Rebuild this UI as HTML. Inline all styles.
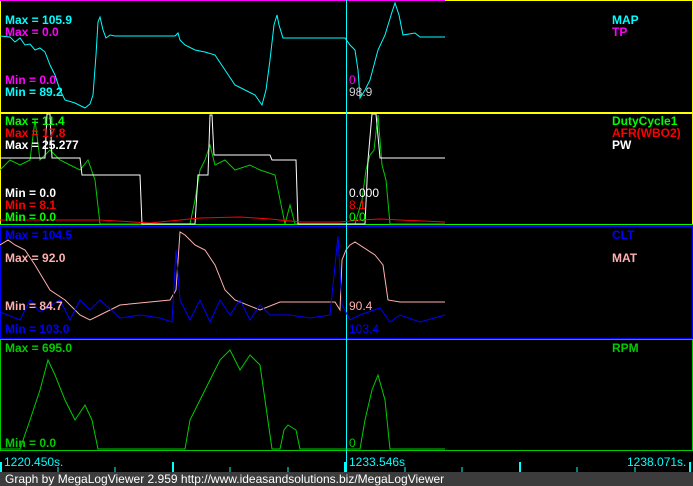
<!DOCTYPE html><html><head><style>
body{margin:0;background:#000;width:693px;height:486px;overflow:hidden;position:relative;font-family:"Liberation Sans",sans-serif}
.l{position:absolute;font-size:12px;font-weight:bold;line-height:12px;white-space:nowrap}
.n{position:absolute;font-size:12px;line-height:12px;white-space:nowrap}
#ft{position:absolute;left:0;top:472px;width:693px;height:14px;background:#3c3c3c;color:#fff;font-size:12px;line-height:14px;padding-left:5px;box-sizing:border-box}
</style></head><body>
<svg width="693" height="486" style="position:absolute;left:0;top:0" fill="none" stroke-width="1">
<rect x="0.5" y="0.5" width="692" height="112" stroke="#ff0"/>
<line x1="0" y1="0.5" x2="445" y2="0.5" stroke="#f0f"/>
<rect x="0.5" y="113.5" width="692" height="111" stroke="#ff0"/>
<line x1="0" y1="224.5" x2="693" y2="224.5" stroke="#0f0"/>
<rect x="0.5" y="226.5" width="692" height="112" stroke="#00f"/>
<rect x="0.5" y="339.5" width="692" height="111" stroke="#0c0"/>
<line x1="346.5" y1="0" x2="346.5" y2="472" stroke="#0ff"/>
<polyline stroke="#0ff" points="0,36 10,37 15,42 20,38 25,45 30,44 35,50 40,48 45,52 50,65 55,75 60,90 65,100 75,103 85,108 90,104 93,95 96,55 98,22 100,17 103,30 106,38 110,35 115,36 175,36 178,33 180,40 185,45 195,50 205,52 215,55 225,70 235,85 245,90 255,95 262,105 266,90 270,60 274,25 277,15 279,25 283,38 345,38 350,45 355,50 358,70 360,98 365,90 370,80 378,50 385,35 392,12 395,3 399,15 403,35 415,33 420,37 445,37"/>
<polyline stroke="#0c0" points="0,170 10,160 20,165 30,160 35,120 40,160 50,150 60,160 70,165 80,170 88,160 95,180 100,224 180,224 190,224 195,200 200,170 205,160 210,145 215,165 225,160 235,170 250,165 260,170 275,175 285,224 290,205 295,224 355,224 362,200 366,170 370,155 374,150 378,115 382,165 386,180 390,224 445,224"/>
<polyline stroke="#fff" points="0,158 45,158 47,114 50,114 52,158 80,158 82,175 140,175 142,224 195,224 198,175 208,175 210,115 212,115 214,155 270,155 272,160 296,160 298,224 365,224 368,160 372,114 376,114 380,158 445,158"/>
<polyline stroke="#f00" points="0,220 100,220 150,223 200,218 240,217 270,219 300,222 340,222 360,220 380,219 400,220 445,222"/>
<polyline stroke="#ffb0b0" points="0,245 8,240 15,245 25,250 35,265 50,290 65,300 80,315 90,320 100,315 120,305 170,300 176,290 180,232 185,235 195,245 205,250 215,265 225,290 235,300 260,310 280,302 335,302 340,310 342,260 346,250 350,245 355,242 375,255 383,265 388,300 400,302 445,302"/>
<polyline stroke="#00f" points="0,312 20,320 30,300 40,312 60,300 70,320 80,300 90,310 100,300 120,318 140,315 160,318 172,322 176,250 180,300 190,320 200,300 210,322 220,300 230,315 240,300 250,320 260,305 270,315 290,315 310,318 330,315 338,236 342,305 350,320 360,315 380,308 390,322 400,315 420,322 445,315"/>
<polyline stroke="#0c0" points="0,449 20,449 30,420 40,390 48,360 55,375 65,400 75,420 85,405 92,420 98,449 180,449 185,449 190,420 200,400 210,380 220,360 230,350 240,370 250,355 260,365 265,400 272,449 280,449 284,430 288,425 296,430 300,449 360,449 365,420 372,390 378,375 385,400 390,449 445,449"/>
<g stroke="#0ff" stroke-width="2"><line x1="1" y1="462" x2="1" y2="472"/><line x1="173" y1="462" x2="173" y2="472"/><line x1="345" y1="462" x2="345" y2="472"/><line x1="520" y1="462" x2="520" y2="472"/><line x1="690" y1="462" x2="690" y2="472"/></g>
<g stroke="#0ff"><line x1="58" y1="467" x2="58" y2="472"/><line x1="115" y1="467" x2="115" y2="472"/><line x1="230" y1="467" x2="230" y2="472"/><line x1="288" y1="467" x2="288" y2="472"/><line x1="405" y1="467" x2="405" y2="472"/><line x1="462" y1="467" x2="462" y2="472"/><line x1="577" y1="467" x2="577" y2="472"/><line x1="635" y1="467" x2="635" y2="472"/></g>
</svg>
<div class="l" style="left:5px;top:14px;color:#0ff">Max = 105.9</div>
<div class="l" style="left:5px;top:26px;color:#f0f">Max = 0.0</div>
<div class="l" style="left:5px;top:74px;color:#f0f">Min = 0.0</div>
<div class="l" style="left:5px;top:86px;color:#0ff">Min = 89.2</div>
<div class="l" style="left:612px;top:14px;color:#0ff">MAP</div>
<div class="l" style="left:612px;top:26px;color:#f0f">TP</div>
<div class="n" style="left:349px;top:74px;color:#f0f">0</div>
<div class="n" style="left:349px;top:86px;color:#ccc">98.9</div>
<div class="l" style="left:5px;top:115px;color:#0f0">Max = 11.4</div>
<div class="l" style="left:5px;top:127px;color:#f00">Max = 17.8</div>
<div class="l" style="left:5px;top:139px;color:#fff">Max = 25.277</div>
<div class="l" style="left:612px;top:115px;color:#0f0">DutyCycle1</div>
<div class="l" style="left:612px;top:127px;color:#f00">AFR(WBO2)</div>
<div class="l" style="left:612px;top:139px;color:#fff">PW</div>
<div class="l" style="left:5px;top:187px;color:#fff">Min = 0.0</div>
<div class="l" style="left:5px;top:199px;color:#f00">Min = 8.1</div>
<div class="l" style="left:5px;top:211px;color:#0f0">Min = 0.0</div>
<div class="n" style="left:349px;top:187px;color:#fff">0.000</div>
<div class="n" style="left:349px;top:199px;color:#f00">8.1</div>
<div class="n" style="left:349px;top:211px;color:#0f0">0.0</div>
<div class="l" style="left:5px;top:229px;color:#00f">Max = 104.5</div>
<div class="l" style="left:5px;top:252px;color:#ffb0b0">Max = 92.0</div>
<div class="l" style="left:612px;top:229px;color:#00f">CLT</div>
<div class="l" style="left:612px;top:252px;color:#ffb0b0">MAT</div>
<div class="l" style="left:5px;top:300px;color:#ffb0b0">Min = 84.7</div>
<div class="l" style="left:5px;top:323px;color:#00f">Min = 103.0</div>
<div class="n" style="left:349px;top:300px;color:#ffb0b0">90.4</div>
<div class="n" style="left:349px;top:323px;color:#00f">103.4</div>
<div class="l" style="left:5px;top:342px;color:#0c0">Max = 695.0</div>
<div class="l" style="left:612px;top:342px;color:#0c0">RPM</div>
<div class="l" style="left:5px;top:437px;color:#0c0">Min = 0.0</div>
<div class="n" style="left:349px;top:437px;color:#0c0">0</div>
<div class="n" style="left:4px;top:456px;color:#0ff">1220.450s.</div>
<div class="n" style="left:349px;top:456px;color:#0ff">1233.546s</div>
<div class="n" style="left:627px;top:456px;color:#0ff">1238.071s.</div>
<div id="ft">Graph by MegaLogViewer 2.959 http://www.ideasandsolutions.biz/MegaLogViewer</div>
</body></html>
